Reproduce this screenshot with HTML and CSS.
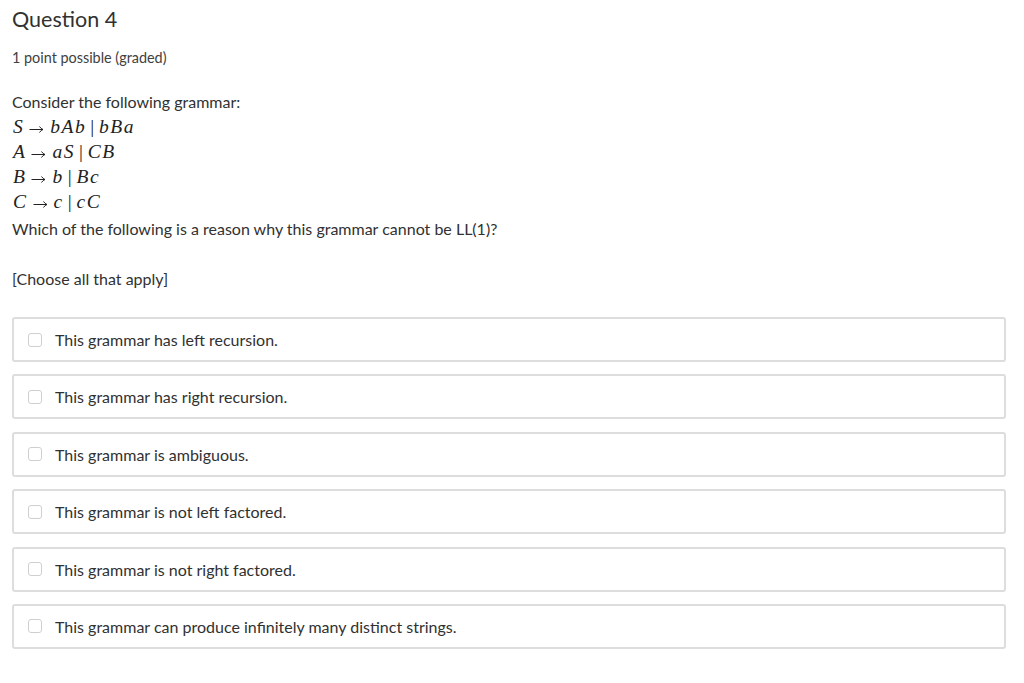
FILE: index.html
```html
<!DOCTYPE html>
<html>
<head>
<meta charset="utf-8">
<link rel="stylesheet" href="styles.css">
</head>
<body>
<div class="problem">
  <h3 class="title">Question 4</h3>
  <div class="meta">1 point possible (graded)</div>
  <div class="prompt">
    <p class="line">Consider the following grammar:</p>
    <p class="math"><i>S</i><svg class="arr" width="15" height="10" viewBox="0 0 15 10"><path d="M0.5 5.5H14 M10.5 2.5 Q12 4.8 14 5.5 Q12 6.2 10.5 8.5" fill="none" stroke="#222" stroke-width="1"/></svg><i>bAb</i><span class="bar">|</span><i>bBa</i></p>
    <p class="math"><i>A</i><svg class="arr" width="15" height="10" viewBox="0 0 15 10"><path d="M0.5 5.5H14 M10.5 2.5 Q12 4.8 14 5.5 Q12 6.2 10.5 8.5" fill="none" stroke="#222" stroke-width="1"/></svg><i>aS</i><span class="bar">|</span><i>CB</i></p>
    <p class="math"><i>B</i><svg class="arr" width="15" height="10" viewBox="0 0 15 10"><path d="M0.5 5.5H14 M10.5 2.5 Q12 4.8 14 5.5 Q12 6.2 10.5 8.5" fill="none" stroke="#222" stroke-width="1"/></svg><i>b</i><span class="bar">|</span><i>Bc</i></p>
    <p class="math"><i>C</i><svg class="arr" width="15" height="10" viewBox="0 0 15 10"><path d="M0.5 5.5H14 M10.5 2.5 Q12 4.8 14 5.5 Q12 6.2 10.5 8.5" fill="none" stroke="#222" stroke-width="1"/></svg><i>c</i><span class="bar">|</span><i>cC</i></p>
    <p class="line which">Which of the following is a reason why this grammar cannot be LL(1)?</p>
    <p class="line choose">[Choose all that apply]</p>
  </div>
  <div class="choices">
    <label class="choice"><span class="box"></span><span class="text">This grammar has left recursion.</span></label>
    <label class="choice"><span class="box"></span><span class="text">This grammar has right recursion.</span></label>
    <label class="choice"><span class="box"></span><span class="text">This grammar is ambiguous.</span></label>
    <label class="choice"><span class="box"></span><span class="text">This grammar is not left factored.</span></label>
    <label class="choice"><span class="box"></span><span class="text">This grammar is not right factored.</span></label>
    <label class="choice"><span class="box"></span><span class="text">This grammar can produce infinitely many distinct strings.</span></label>
  </div>
</div>
</body>
</html>
```
FILE: styles.css
```css
html, body {
  margin: 0;
  padding: 0;
  background: #ffffff;
}
body {
  font-family: "Lato", "Open Sans", sans-serif;
  color: #313131;
}
.problem {
  padding: 0 18px 0 12px;
}
.title {
  margin: 0;
  padding-top: 5px;
  font-size: 21.5px;
  font-weight: 400;
  line-height: 28px;
  color: #313131;
}
.meta {
  margin-top: 16px;
  font-size: 14.4px;
  line-height: 18px;
  color: #414141;
}
.prompt {
  margin-top: 22px;
  font-size: 16px;
}
.line {
  margin: 0;
  line-height: 25px;
}
.math {
  margin: 0;
  height: 25px;
  line-height: 25px;
  font-family: "Liberation Serif", "DejaVu Serif", serif;
  font-size: 19.5px;
  color: #222;
  padding-left: 1px;
  white-space: nowrap;
}
.math i {
  letter-spacing: 1.5px;
}
.math .arr {
  vertical-align: -1px;
  margin: 0 6px 0 5px;
}
.math .bar {
  font-style: normal;
  line-height: 0;
  margin: 0 5px 0 4px;
}
.which {
  margin-top: 2px;
}
.choose {
  margin-top: 25px;
}
.choices {
  margin-top: 26px;
  display: flex;
  flex-direction: column;
  gap: 12.4px;
}
.choice {
  display: flex;
  align-items: center;
  height: 41px;
  border: 2px solid #dddddd;
  border-radius: 3px;
  padding-left: 14px;
  font-size: 16px;
  color: #313131;
}
.box {
  width: 12px;
  height: 12px;
  border: 1px solid #cfcfcf;
  border-radius: 3px;
  margin-right: 13px;
  background: #fff;
}
```
